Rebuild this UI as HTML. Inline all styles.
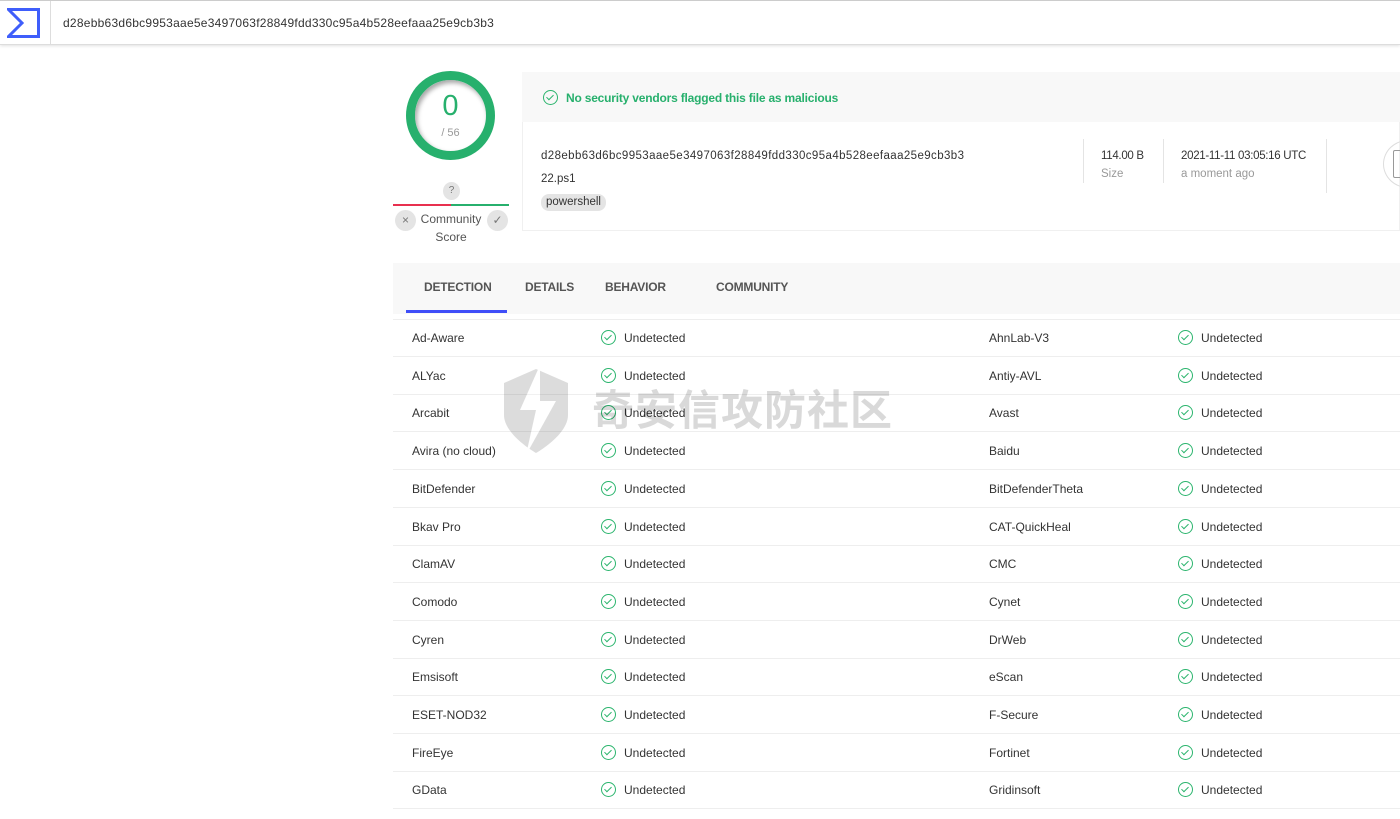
<!DOCTYPE html>
<html><head><meta charset="utf-8"><style>
*{box-sizing:border-box;margin:0;padding:0}
body{width:1400px;height:819px;overflow:hidden;background:#fff;font-family:"Liberation Sans",sans-serif;color:#313131;position:relative}
.top{position:absolute;left:0;top:0;width:1400px;height:45px;border-top:1px solid #ccc;border-bottom:1px solid #ddd;box-shadow:0 1px 3px rgba(0,0,0,.12);background:#fff}
.top .sep{position:absolute;left:50px;top:0;width:1px;height:44px;background:#ddd}
.top .h{position:absolute;left:63px;top:15px;font-size:12px;color:#333;letter-spacing:.25px}
.abs{position:absolute}
.row{position:absolute;left:393px;width:1007px;height:38px;border-bottom:1px solid #eee;font-size:12px;color:#333}
.row span{position:absolute;top:12px}
.ck{position:absolute;top:11px;width:15px;height:15px;border:1.3px solid #2cb56e;border-radius:50%}
.ck:after{content:"";position:absolute;left:4px;top:2px;width:3px;height:6px;border:solid #2cb56e;border-width:0 1.3px 1.3px 0;transform:rotate(45deg)}
.tab{position:absolute;top:280px;font-size:12px;color:#444;letter-spacing:-.2px;font-weight:bold;color:#555}
</style></head><body>
<div class="top"><svg class="abs" style="left:7px;top:7px" width="33" height="30" viewBox="0 0 33 30"><path d="M1.5 1.5H31.5V28.5H1.5L15 15Z" fill="none" stroke="#3f5efb" stroke-width="3"/></svg><div class="sep"></div><div class="h">d28ebb63d6bc9953aae5e3497063f28849fdd330c95a4b528eefaaa25e9cb3b3</div></div>

<div class="abs" style="left:406px;top:71px;width:89px;height:89px;border-radius:50%;border:9px solid #27b06d;box-shadow:inset 2px 3px 5px rgba(0,0,0,.35)"></div>
<div class="abs" style="left:406px;top:90px;width:89px;text-align:center;font-size:29px;color:#27b06d">0</div>
<div class="abs" style="left:406px;top:127px;width:89px;text-align:center;font-size:11px;color:#999">/ 56</div>
<div class="abs" style="left:443px;top:182px;width:17px;height:18px;border-radius:50%;background:#e4e4e4;font-size:10px;color:#777;text-align:center;line-height:18px">?</div>
<div class="abs" style="left:393px;top:204px;width:58px;height:2px;background:#e8304f"></div>
<div class="abs" style="left:451px;top:204px;width:58px;height:2px;background:#27b06d"></div>
<div class="abs" style="left:395px;top:210px;width:21px;height:21px;border-radius:50%;background:#e4e4e4;text-align:center;line-height:21px;font-size:12px;color:#777">×</div>
<div class="abs" style="left:487px;top:210px;width:21px;height:21px;border-radius:50%;background:#e4e4e4;text-align:center;line-height:21px;font-size:12px;color:#777">✓</div>
<div class="abs" style="left:416px;top:210px;width:70px;text-align:center;font-size:12px;line-height:18px;color:#555">Community<br>Score</div>

<div class="abs" style="left:522px;top:72px;width:878px;height:50px;background:#f8f8f8"></div>
<div class="ck" style="left:543px;top:90px;border-color:#2cb56e"></div>
<div class="abs" style="left:566px;top:91px;font-size:12px;color:#27b06d;letter-spacing:-.2px;font-weight:bold">No security vendors flagged this file as malicious</div>
<div class="abs" style="left:522px;top:122px;width:878px;height:109px;border:1px solid #f0f0f0;border-top:none"></div>
<div class="abs" style="left:541px;top:150px;font-size:11.5px;color:#333;letter-spacing:.4px">d28ebb63d6bc9953aae5e3497063f28849fdd330c95a4b528eefaaa25e9cb3b3</div>
<div class="abs" style="left:541px;top:173px;font-size:11.5px;color:#333">22.ps1</div>
<div class="abs" style="left:541px;top:194px;padding:0 5px;height:17px;line-height:17px;border-radius:8px;background:#e4e4e4;font-size:11.5px;color:#333">powershell</div>
<div class="abs" style="left:1083px;top:139px;width:1px;height:44px;background:#e4e4e4"></div>
<div class="abs" style="left:1101px;top:150px;font-size:11.5px;color:#333;letter-spacing:-.3px">114.00 B</div>
<div class="abs" style="left:1101px;top:168px;font-size:11.5px;color:#999">Size</div>
<div class="abs" style="left:1163px;top:139px;width:1px;height:44px;background:#e4e4e4"></div>
<div class="abs" style="left:1181px;top:150px;font-size:11.5px;color:#333;letter-spacing:-.3px">2021-11-11 03:05:16 UTC</div>
<div class="abs" style="left:1181px;top:168px;font-size:11.5px;color:#999">a moment ago</div>
<div class="abs" style="left:1326px;top:139px;width:1px;height:54px;background:#e4e4e4"></div>
<div class="abs" style="left:1383px;top:140px;width:50px;height:48px;border-radius:50%;border:1px solid #ddd"></div>
<div class="abs" style="left:1393px;top:150px;width:10px;height:28px;border:1.5px solid #999;border-radius:2px"></div>

<div class="abs" style="left:393px;top:263px;width:1007px;height:51px;background:#f8f8f8"></div>
<div class="tab" style="left:424px">DETECTION</div>
<div class="tab" style="left:525px">DETAILS</div>
<div class="tab" style="left:605px">BEHAVIOR</div>
<div class="tab" style="left:716px">COMMUNITY</div>
<div class="abs" style="left:406px;top:310px;width:101px;height:3px;background:#3f4ef8"></div>
<div class="abs" style="left:393px;top:319px;width:1007px;height:1px;background:#eee"></div>

<div id="rows"></div>
<script>
var d=[["Ad-Aware","AhnLab-V3"],["ALYac","Antiy-AVL"],["Arcabit","Avast"],["Avira (no cloud)","Baidu"],["BitDefender","BitDefenderTheta"],["Bkav Pro","CAT-QuickHeal"],["ClamAV","CMC"],["Comodo","Cynet"],["Cyren","DrWeb"],["Emsisoft","eScan"],["ESET-NOD32","F-Secure"],["FireEye","Fortinet"],["GData","Gridinsoft"]];
var h="";d.forEach(function(r,i){var t=Math.round(319+i*37.7);
h+='<div class="row" style="top:'+t+'px"><span style="left:19px">'+r[0]+'</span><div class="ck" style="left:208px"></div><span style="left:231px">Undetected</span><span style="left:596px">'+r[1]+'</span><div class="ck" style="left:785px"></div><span style="left:808px">Undetected</span></div>';});
document.getElementById("rows").innerHTML=h;
</script>
<svg class="abs" style="left:500px;top:365px;opacity:.2" width="72" height="90" viewBox="0 0 72 90"><path d="M4 18L36 4L68 18V50C68 70 36 88 36 88C36 88 4 70 4 50Z" fill="#555"/><path d="M40 0L20 45H36L26 90L56 36H40Z" fill="#fff"/></svg>
<div class="abs" style="left:592px;top:382px;font-family:'Noto Sans CJK SC',sans-serif;font-size:42px;font-weight:bold;color:rgba(0,0,0,.15);letter-spacing:1px;line-height:52px">奇安信攻防社区</div>
</body></html>
